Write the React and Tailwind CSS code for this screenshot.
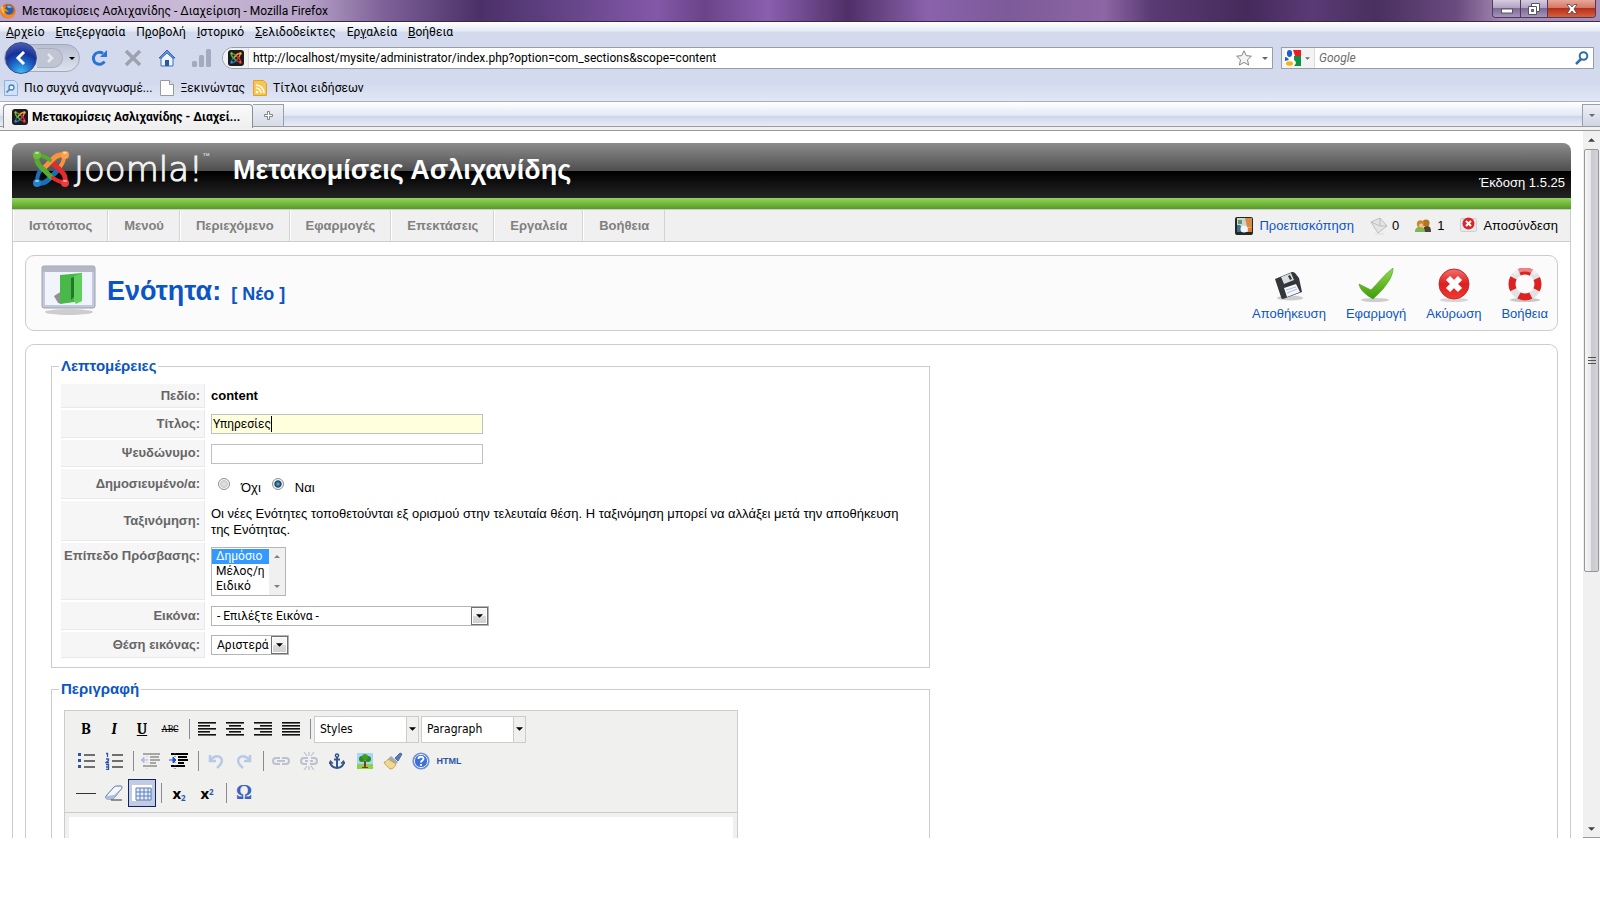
import { useState } from 'react';
import { clsx } from 'clsx';

const BROWSER_MENU = [
  ['', 'Α', 'ρχείο'],
  ['', 'Ε', 'πεξεργασία'],
  ['Π', 'ρ', 'οβολή'],
  ['', 'Ι', 'στορικό'],
  ['', 'Σ', 'ελιδοδείκτες'],
  ['Ερ', 'γ', 'αλεία'],
  ['', 'Β', 'οήθεια'],
];

const ADMIN_MENU = ['Ιστότοπος', 'Μενού', 'Περιεχόμενο', 'Εφαρμογές', 'Επεκτάσεις', 'Εργαλεία', 'Βοήθεια'];

function Caret({ className }) {
  return (
    <svg viewBox="0 0 8 4" className={clsx('shrink-0', className)} fill="currentColor" aria-hidden="true">
      <path d="M0 0h8L4 4z" />
    </svg>
  );
}

function JoomlaMark({ className }) {
  return (
    <svg viewBox="0 0 38 38" className={className} fill="none" strokeLinecap="round" strokeLinejoin="round" aria-hidden="true">
      <path d="M11 17c-4 4-6 8-6 15" stroke="#1670b8" strokeWidth="4" />
      <path d="M27 18c4-4 5-7 5-12" stroke="#f9923c" strokeWidth="4" />
      <path d="M33 5c-5-1-8 0-11 3L11 19" stroke="#f9923c" strokeWidth="5" />
      <path d="M5 33c5 1 8 0 11-3l11-11" stroke="#1670b8" strokeWidth="5" />
      <path d="M33 33c1-5 0-8-3-11L19 11" stroke="#e32a2d" strokeWidth="5" />
      <path d="M5 5c-1 5 0 8 3 11l11 11" stroke="#58a92f" strokeWidth="5" />
      <path d="m17 13 5-5" stroke="#f9923c" strokeWidth="5" />
      <path d="M18 10c-4-3-7-5-13-5" stroke="#58a92f" strokeWidth="4" />
      <path d="M21 28c4 3 7 4 12 5" stroke="#e32a2d" strokeWidth="4" />
      <circle cx="5" cy="5" r="4" fill="#6cbb3c" />
      <circle cx="33" cy="5" r="4" fill="#fba04c" />
      <circle cx="5" cy="33" r="4" fill="#2480c8" />
      <circle cx="33" cy="33" r="4" fill="#ee3a3c" />
      <g fill="#fff" opacity=".6">
        <ellipse cx="5" cy="3" rx="2" ry="1" />
        <ellipse cx="33" cy="3" rx="2" ry="1" />
        <ellipse cx="5" cy="31" rx="2" ry="1" />
        <ellipse cx="33" cy="31" rx="2" ry="1" />
      </g>
    </svg>
  );
}

function Favicon() {
  return (
    <span className="flex size-4 shrink-0 items-center justify-center rounded-[3px] bg-[#1c1c1c]">
      <JoomlaMark className="size-3" />
    </span>
  );
}

function TitleBar() {
  return (
    <header className="flex h-[22px] items-start border-b border-[#3a2750] bg-[linear-gradient(90deg,#b9a5cb_0%,#c9bad6_12%,#b8a4c8_19%,#7d6198_24%,#4b3068_30%,#5d3f80_34%,#8458a8_41%,#6a4489_44%,#8a5fae_48%,#502f68_53%,#8a62ac_58%,#7d5a9a_63%,#8d66a4_69%,#5a3a72_72%,#452a5c_78%,#5a3a74_82%,#48305f_86%,#6b4a80_91%,#a58bb2_94%,#a88fb8_100%)]">
      <div className="flex h-[21px] items-center gap-1.5">
        <svg viewBox="0 0 16 16" className="size-4" aria-hidden="true">
          <circle cx="8" cy="8" r="7.6" fill="#e0701a" />
          <circle cx="8.6" cy="6.8" r="5" fill="#2a5ea8" />
          <path d="M7 3c2-1 5 0 6 2-2-1-3 0-4 0s-2-1-2-2z" fill="#7fb6e6" />
          <path d="M1 4c-1 6 2 11 8 11 4 0 6-3 7-8-1 3-3 5-6 5-4 0-5-2-5-4 1 1 3 1 4 0-2 0-2-2-4-2 0-1 1-2 1-3-2 0-3 1-4 3z" fill="#f58a1f" />
          <path d="M1 4c0 3 1 5 3 7 0-3-1-5-1-8z" fill="#fbc23c" />
        </svg>
        <h1 className="text-[12px] leading-4 text-black">Μετακομίσεις Ασλιχανίδης - Διαχείριση - Mozilla Firefox</h1>
      </div>
      <div className="mr-1 ml-auto flex h-[18px] overflow-hidden rounded-b border border-t-0 border-[#4a3c5c]">
        <button type="button" aria-label="Ελαχιστοποίηση" className="flex w-7 items-center justify-center border-r border-[#4a3c5c] bg-[linear-gradient(#d6cbdf_0%,#b3a3c3_45%,#7d6a96_50%,#a594ba_100%)]">
          <svg viewBox="0 0 12 6" className="mt-1 h-1.5 w-3" aria-hidden="true">
            <rect x=".5" y="1" width="11" height="4" fill="#fff" stroke="#55555f" />
          </svg>
        </button>
        <button type="button" aria-label="Επαναφορά" className="flex w-[27px] items-center justify-center border-r border-[#4a3c5c] bg-[linear-gradient(#d6cbdf_0%,#b3a3c3_45%,#7d6a96_50%,#a594ba_100%)]">
          <svg viewBox="0 0 12 12" className="size-3" fill="#fff" stroke="#55555f" aria-hidden="true">
            <path d="M3.500 .5h8v8h-8z" />
            <path d="M.5 3.500h8v8h-8z" />
            <path d="M3.500 6.500h2v2h-2z" fill="#8a7aa0" />
          </svg>
        </button>
        <button type="button" aria-label="Κλείσιμο" className="flex w-[47px] items-center justify-center bg-[linear-gradient(#e6a79b_0%,#d67866_45%,#b5301c_50%,#d8603c_100%)]">
          <svg viewBox="0 0 12 10" className="h-2.5 w-3" aria-hidden="true">
            <path d="M1 .5h3l2 2.500 2-2.500h3L8 5l3 4.500H8L6 7 4 9.500H1L4 5z" fill="#fff" stroke="#55404a" strokeWidth=".8" />
          </svg>
        </button>
      </div>
    </header>
  );
}

function NavigationBar() {
  return (
    <div className="flex h-8 items-center pr-1.5 pl-1">
      <div className="flex h-7 w-[76px] items-center rounded-full border border-[#a3a9bd] bg-[linear-gradient(#b9c0d2,#dde2ee)]">
        <button type="button" aria-label="Πίσω" className="-my-1 flex size-8 shrink-0 items-center justify-center rounded-full border border-[#3a4a86] bg-[radial-gradient(circle_at_50%_100%,#3fc4f5_0%,#1c68c8_35%,#16309a_60%,#5c6fb8_100%)]">
          <svg viewBox="0 0 14 14" className="size-3.5" fill="none" stroke="#fff" strokeWidth="3" aria-hidden="true">
            <path d="M10 1 4 7l6 6" />
          </svg>
        </button>
        <button type="button" aria-label="Μπροστά" className="flex h-5 w-[26px] items-center justify-center rounded-r-full border border-l-0 border-[#a9afc0] bg-[#bfc5d3]">
          <svg viewBox="0 0 10 10" className="size-2.5" fill="none" stroke="#e4e7f0" strokeWidth="2.500" aria-hidden="true">
            <path d="m3 1 4 4-4 4" />
          </svg>
        </button>
        <Caret className="ml-1.5 h-[3px] w-1.5 text-black" />
      </div>
      <div className="ml-2.5 flex items-center gap-4">
        <button type="button" aria-label="Ανανέωση">
          <svg viewBox="0 0 18 18" className="size-[18px]" fill="none" aria-hidden="true">
            <path d="M14.500 12.500A6 6 0 1 1 13 4.500" stroke="#2a74d8" strokeWidth="3" />
            <path d="M17 1v7h-7z" fill="#2a74d8" />
          </svg>
        </button>
        <button type="button" aria-label="Διακοπή">
          <svg viewBox="0 0 18 18" className="size-[18px]" stroke="#9da2ae" strokeWidth="3.500" aria-hidden="true">
            <path d="m2 2 14 14M16 2 2 16" />
          </svg>
        </button>
        <button type="button" aria-label="Αρχική">
          <svg viewBox="0 0 18 18" className="size-[18px]" aria-hidden="true">
            <path d="M3 9v8h12V9L9 3z" fill="#eef4fd" stroke="#3b6ec4" />
            <path d="M9 1 1 9h2.500L9 4l5.500 5H17z" fill="#5f94e0" stroke="#2a57a8" strokeWidth=".8" />
            <path d="M7 11h4v6H7z" fill="#2a57a8" />
          </svg>
        </button>
        <svg viewBox="0 0 20 20" className="size-5" fill="#a2abbe" aria-hidden="true">
          <rect x="0" y="13" width="5" height="6" rx="1.500" />
          <rect x="7" y="7" width="5" height="12" rx="1.500" />
          <rect x="14" y="1" width="5" height="18" rx="1.500" />
        </svg>
      </div>
      <div className="ml-2.5 flex h-[22px] min-w-0 flex-1 items-center overflow-hidden rounded-l-xl border border-[#9a9da6] bg-white">
        <span className="flex h-full w-[26px] items-center justify-end border-r border-[#dcdcdc] bg-[#f0f1f4] pr-1">
          <Favicon />
        </span>
        <input
          type="text"
          aria-label="Διεύθυνση"
          defaultValue="http://localhost/mysite/administrator/index.php?option=com_sections&scope=content"
          className="min-w-0 flex-1 bg-transparent px-1 text-[12px] text-black outline-none"
        />
        <svg viewBox="0 0 16 16" className="size-4" fill="#f4f4f4" stroke="#84868c" strokeLinejoin="round" aria-hidden="true">
          <path d="m8 .8 2.200 4.800 5.200.6-3.900 3.600 1.100 5.200L8 12.400 3.400 15l1.100-5.200L.6 6.200l5.200-.6z" />
        </svg>
        <Caret className="mr-1 ml-2.5 h-[3px] w-1.5 text-[#66686e]" />
      </div>
      <div className="ml-2 flex h-[22px] w-[313px] items-center border border-[#9a9da6] bg-white">
        <div className="flex h-full w-[33px] items-center gap-1 border-r border-[#dcdcdc] bg-[#f3f3f3] pl-[3px]">
          <svg viewBox="0 0 16 16" className="size-4" aria-hidden="true">
            <path d="M0 0h16v16H0z" fill="#fff" />
            <path d="M8 0h8v6h-6z" fill="#ed1c24" />
            <path d="M9 6h7v10H9c2-2 3-4 0-6z" fill="#0c9344" />
            <ellipse cx="4.500" cy="3.500" rx="2.600" ry="3.400" fill="#1b5fce" />
            <path d="M0 7c2 0 3 1 4 3L0 11z" fill="#1b5fce" />
            <ellipse cx="4.500" cy="13.500" rx="3.600" ry="2.300" fill="#f8b219" />
          </svg>
          <Caret className="h-[3px] w-[5px] text-[#66686e]" />
        </div>
        <input type="search" aria-label="Αναζήτηση" placeholder="Google" className="min-w-0 flex-1 bg-transparent px-1 text-[12px] italic outline-none placeholder:text-[#6d6d6d]" />
        <svg viewBox="0 0 14 14" className="mr-1 size-3.5" fill="none" stroke="#2f6fa8" aria-hidden="true">
          <circle cx="8.500" cy="5" r="3.800" strokeWidth="2" />
          <path d="m6 8-5 5" strokeWidth="2.500" />
        </svg>
      </div>
    </div>
  );
}

function BookmarksBar() {
  return (
    <div className="flex h-7 items-center gap-2 border-b border-[#a9aebd] pl-1">
      <a href="#frequent" className="flex items-center gap-1.5">
        <svg viewBox="0 0 14 16" className="h-4 w-3.5" aria-hidden="true">
          <path d="M.5.5h10l3 3v12H.5z" fill="#cfe2f6" stroke="#8fb2da" />
          <circle cx="7.500" cy="7.500" r="2.500" fill="#e8f3fd" stroke="#4a7fc0" strokeWidth="1.300" />
          <path d="m5.500 9.500-3 3" stroke="#4a7fc0" strokeWidth="1.600" />
        </svg>
        Πιο συχνά αναγνωσμέ...
      </a>
      <a href="#start" className="flex items-center gap-1.5">
        <svg viewBox="0 0 14 16" className="h-4 w-3.5" aria-hidden="true">
          <path d="M.5.5h9l4 4v11H.5z" fill="#fdfdfd" stroke="#9a9a9a" />
          <path d="M9.500.5v4h4" fill="#e4e4e4" stroke="#9a9a9a" />
        </svg>
        Ξεκινώντας
      </a>
      <a href="#headlines" className="flex items-center gap-1.5">
        <svg viewBox="0 0 14 16" className="h-4 w-3.5" fill="none" aria-hidden="true">
          <path d="M.5.5h10l3 3v12H.5z" fill="#fbc64f" stroke="#e0a030" />
          <circle cx="4" cy="12" r="1.300" fill="#fff" />
          <path d="M3 8a5 5 0 0 1 5 5M3 5a8 8 0 0 1 8 8" stroke="#fff" strokeWidth="1.500" />
        </svg>
        Τίτλοι ειδήσεων
      </a>
    </div>
  );
}

function TabStrip() {
  return (
    <div className="flex h-[29px] items-end border-b border-[#9b9b9b] bg-[linear-gradient(#ffffff_0%,#e2e8f4_48%,#ccd5ea_50%,#e6ebf6_84%,#9b9b9b_84%,#9b9b9b_88%,#f0f0f0_88%)] pl-[3px]">
      <a href="#tab" className="mb-0.5 flex h-6 w-[250px] items-center gap-1 rounded-t border border-b-0 border-[#8d8f94] bg-[linear-gradient(#fafafa,#efefef)] pl-2 font-bold whitespace-nowrap text-black">
        <Favicon />
        Μετακομίσεις Ασλιχανίδης - Διαχεί...
      </a>
      <button type="button" aria-label="Νέα καρτέλα" className="mb-1 flex h-[22px] w-[31px] items-center justify-center border border-b-0 border-l-0 border-[#9b9fa9] bg-[linear-gradient(#eef0f5,#d6dbe8)]">
        <svg viewBox="0 0 9 9" className="size-[9px]" fill="#fff" stroke="#77797f" strokeWidth=".9" aria-hidden="true">
          <path d="M3.500.5h2v3h3v2h-3v3h-2v-3h-3v-2h3z" />
        </svg>
      </button>
      <button type="button" aria-label="Λίστα καρτελών" className="mb-1 ml-auto flex h-[22px] w-[18px] items-center justify-center border border-r-0 border-b-0 border-[#9b9fa9] bg-[linear-gradient(#eef0f5,#cfd5e4)]">
        <Caret className="h-[3px] w-1.5 text-[#66686e]" />
      </button>
    </div>
  );
}

function SiteHeader() {
  return (
    <div className="overflow-hidden rounded-t-lg">
      <div className="flex h-[55px] bg-[linear-gradient(#8c8c8c_0%,#505050_50%,#000000_51%,#242424_100%)] text-white">
        <div className="flex w-[203px] items-start gap-1 pt-[7px] pl-5">
          <JoomlaMark className="size-[38px]" />
          <span className="flex font-['DejaVu_Sans'] text-[34px] leading-[38px] font-extralight text-[#f2f2f2] [-webkit-text-stroke:1px_#f2f2f2]">
            Joomla!<sup className="top-0 text-[7px] leading-3 [-webkit-text-stroke:0px]">™</sup>
          </span>
        </div>
        <h2 className="pl-[18px] text-[27px] leading-[54px] font-bold">Μετακομίσεις Ασλιχανίδης</h2>
        <p className="mt-8 mr-1.5 ml-auto text-[13px] leading-4">Έκδοση 1.5.25</p>
      </div>
      <div className="h-[11px] bg-[linear-gradient(#93d65c,#559a26)]" />
    </div>
  );
}

function AdminMenu() {
  return (
    <div className="flex h-[33px] items-stretch border border-[#cccccc] bg-[#f0f0f0] text-[13px]">
      <nav className="flex font-bold text-[#808080]">
        {ADMIN_MENU.map((item) => (
          <a key={item} href="#menu" className="flex items-center border-r border-l border-r-[#d4d4d4] border-l-white px-[15px]">
            {item}
          </a>
        ))}
      </nav>
      <div className="mr-3 ml-auto flex items-center gap-4 text-black">
        <a href="#preview" className="flex items-center gap-1.5 text-[#0b55c4]">
          <svg viewBox="0 0 18 18" className="size-[18px]" aria-hidden="true">
            <rect width="18" height="18" rx="2" fill="#22282a" />
            <path d="M2 1h15v14H2z" fill="#c8d8d2" />
            <path d="M10 1h7v10l-5-1z" fill="#d98a45" />
            <path d="M2 8h3l2 3v4H2z" fill="#35748c" />
            <circle cx="9" cy="12" r="3.500" fill="#f4f4f4" />
            <path d="M3 3h4v4H3z" fill="#6d8f6a" />
            <path d="M13 11h4v4h-4z" fill="#e07a2c" />
          </svg>
          Προεπισκόπηση
        </a>
        <a href="#messages" className="flex items-center gap-1">
          <svg viewBox="0 0 18 18" className="size-[18px]" stroke="#b4b4b4" strokeWidth=".8" aria-hidden="true">
            <path d="m1 5 9-4 7 8-9 7z" fill="#e4e4e4" />
            <path d="m1 5 9 4 0-8M10 9l7 0" fill="none" />
            <path d="M5 17h9" stroke="#d4d4d4" />
          </svg>
          0
        </a>
        <a href="#users" className="flex items-center gap-1.5">
          <svg viewBox="0 0 16 14" className="h-3.5 w-4" aria-hidden="true">
            <path d="M8 13c0-4 1-6 4-6s4 2 4 6z" fill="#4c4335" />
            <circle cx="11" cy="4" r="3.600" fill="#b6741c" />
            <path d="M0 13c0-4 2-5 5-5s5 1 5 5z" fill="#7fb653" />
            <circle cx="5.500" cy="5" r="3.700" fill="#c98a2c" />
            <circle cx="6" cy="6.500" r="2" fill="#f0c890" />
          </svg>
          1
        </a>
        <a href="#logout" className="flex items-center gap-1.5">
          <svg viewBox="0 0 17 17" className="size-[17px]" aria-hidden="true">
            <rect x=".5" y="1.500" width="16" height="13" rx="1" fill="#e6e8f0" stroke="#cdd0da" />
            <circle cx="8.500" cy="6.500" r="6" fill="#dc2626" />
            <path d="m6 4 5 5m0-5L6 9" stroke="#fff" strokeWidth="2" />
          </svg>
          Αποσύνδεση
        </a>
      </div>
    </div>
  );
}

function SaveIcon() {
  return (
    <svg viewBox="0 0 32 34" className="h-[34px] w-8" aria-hidden="true">
      <ellipse cx="17" cy="30" rx="13" ry="2.500" fill="#000" opacity=".18" />
      <path d="m2 11 17-7c1 0 2 0 3 1l4 5 3 14-19 7c-1 0-2-1-2-2z" fill="#33373b" />
      <path d="m8 9 10-4 3 7-10 4z" fill="#d9dde2" />
      <path d="m15 8 2-1 2 4-2 1z" fill="#33373b" />
      <path d="m11 20 12-4 4 8-13 5z" fill="#f5f7fa" />
      <path d="m13 22 10-3m-9 6 10-4" stroke="#a9bfe0" />
    </svg>
  );
}

function ApplyIcon() {
  return (
    <svg viewBox="0 0 36 34" className="h-[34px] w-9" aria-hidden="true">
      <defs>
        <linearGradient id="tick" x1="0" y1="0" x2="0" y2="1">
          <stop offset="0" stopColor="#8fdc4c" />
          <stop offset="1" stopColor="#3f9a08" />
        </linearGradient>
      </defs>
      <ellipse cx="17" cy="32" rx="14" ry="2" fill="#000" opacity=".18" />
      <path d="M1 16c4 2 8 4 12 6C20 15 27 6 35 0c0 4-1 7-3 11-4 7-10 14-17 20C10 28 2 23 1 16z" fill="url(#tick)" stroke="#4c9e1c" strokeWidth=".6" />
    </svg>
  );
}

function CancelIcon() {
  return (
    <svg viewBox="0 0 34 34" className="size-[34px]" aria-hidden="true">
      <defs>
        <linearGradient id="cross" x1="0" y1="0" x2="0" y2="1">
          <stop offset="0" stopColor="#f2706e" />
          <stop offset=".5" stopColor="#dc1f1f" />
          <stop offset="1" stopColor="#f03a30" />
        </linearGradient>
      </defs>
      <ellipse cx="17" cy="32" rx="14" ry="2" fill="#000" opacity=".15" />
      <circle cx="17" cy="16" r="15" fill="url(#cross)" stroke="#c42a2a" />
      <path d="m11 10 12 12m0-12L11 22" stroke="#fff" strokeWidth="6" />
    </svg>
  );
}

function HelpRingIcon() {
  return (
    <svg viewBox="0 0 34 34" className="size-[34px]" fill="none" aria-hidden="true">
      <ellipse cx="17" cy="32" rx="15" ry="2" fill="#000" opacity=".2" />
      <circle cx="17" cy="16" r="13" stroke="#e2e2e2" strokeWidth="7" />
      <circle cx="17" cy="16" r="13" stroke="#de2222" strokeWidth="7" strokeDasharray="12.400 8" strokeDashoffset="6.200" />
      <path d="M6 6a16 16 0 0 1 22 0" stroke="#fff" strokeWidth="4" opacity=".45" />
    </svg>
  );
}

const ACTIONS = [
  { label: 'Αποθήκευση', icon: SaveIcon },
  { label: 'Εφαρμογή', icon: ApplyIcon },
  { label: 'Ακύρωση', icon: CancelIcon },
  { label: 'Βοήθεια', icon: HelpRingIcon },
];

function PageToolbar() {
  return (
    <section className="flex h-[76px] items-start rounded-[9px] border border-[#cccccc] bg-[#fbfbfb] pr-[9px] pl-[15px]">
      <svg viewBox="0 0 56 52" className="mt-[9px] h-[52px] w-14" aria-hidden="true">
        <ellipse cx="28" cy="47" rx="24" ry="3" fill="#000" opacity=".18" />
        <rect x="1" y="1" width="53" height="42" rx="2" fill="#c3c8dc" stroke="#9a9fb2" />
        <path d="M2 2h51v5H2z" fill="#b4b7c4" />
        <path d="M4 7h47v33H4z" fill="#f2f4fb" />
        <path d="m13 31 8-5v13l-4-1z" fill="#8e938f" />
        <path d="m19 10 22-2v28l-22 3z" fill="#48b848" />
        <path d="m33 11 8-3v28l-6 3-2-3z" fill="#5fd05c" />
        <path d="m30 13 3-1v20l-3 3z" fill="#23762a" />
      </svg>
      <h2 className="ml-2.5 flex items-baseline gap-2.5 text-[27px] leading-[70px] font-bold text-[#0b55c4]">
        Ενότητα: <small className="text-[18px]">[ Νέο ]</small>
      </h2>
      <div className="ml-auto flex gap-5 pt-3 text-[13px] text-[#0b55c4]">
        {ACTIONS.map(({ label, icon: Icon }) => (
          <button key={label} type="button" className="flex flex-col items-center gap-1 leading-4">
            <Icon />
            {label}
          </button>
        ))}
      </div>
    </section>
  );
}

function Row({ label, htmlFor, className, top, children }) {
  return (
    <div className={clsx('flex', className)}>
      <label
        htmlFor={htmlFor}
        className={clsx(
          'flex w-36 shrink-0 justify-end border-r border-b border-[#e9e9e9] bg-[#f6f6f6] pr-1 font-bold whitespace-nowrap text-[#666666]',
          top ? 'items-start pt-[5px]' : 'items-center'
        )}
      >
        {label}
      </label>
      <div className="flex min-w-0 flex-1 items-center pl-1.5">{children}</div>
    </div>
  );
}

function DropDown({ id, options, className }) {
  return (
    <span className={clsx('relative flex h-5', className)}>
      <select id={id} className="w-full appearance-none border border-[#b5b5b5] bg-white pl-[5px] font-['Roboto'] text-[12px] text-black outline-none">
        {options.map((option) => (
          <option key={option}>{option}</option>
        ))}
      </select>
      <span className="pointer-events-none absolute top-px right-px flex h-[18px] w-[17px] items-center justify-center border border-[#6f6f6f] bg-[linear-gradient(#f4f4f4_50%,#dadada_50%,#cfcfcf)] shadow-[inset_0_0_0_1px_#ffffff]">
        <Caret className="h-1 w-[7px] text-black" />
      </span>
    </span>
  );
}

function PublishedRadio({ id, checked, onChange, children }) {
  return (
    <span className="flex items-center">
      <input
        id={id}
        type="radio"
        name="published"
        checked={checked}
        onChange={onChange}
        className="mb-1 size-3 appearance-none rounded-full border border-[#8e8f8f] bg-[radial-gradient(circle,#e6e6e6_0%,#cdcdcd_50%,#f6f6f6_60%)] checked:bg-[radial-gradient(circle,#5cc0ea_0%,#123a5c_45%,#f6f6f6_58%)]"
      />
      <label htmlFor={id} className="ml-[11px] pt-[3px]">
        {children}
      </label>
    </span>
  );
}

function DetailsFieldset() {
  const [title, setTitle] = useState('Υπηρεσίες');
  const [published, setPublished] = useState(true);

  return (
    <fieldset className="border border-[#cccccc] px-[9px] pb-[9px] text-[13px] leading-4">
      <legend className="-ml-0.5 px-0.5 text-[15px] font-bold text-[#0b55c4]">Λεπτομέρειες</legend>
      <div className="flex flex-col gap-0.5 pt-2.5">
        <Row label="Πεδίο:" className="min-h-6">
          <b className="text-black">content</b>
        </Row>
        <Row label="Τίτλος:" htmlFor="title" className="min-h-7">
          <span className="relative flex">
            <input
              id="title"
              type="text"
              value={title}
              onChange={(e) => setTitle(e.target.value)}
              className="h-5 w-[272px] border border-[#c0c0c0] bg-[#ffffdd] px-px font-['Roboto'] text-[12px] text-black outline-none"
            />
            <span className="pointer-events-none absolute top-0.5 left-0 flex pl-0.5 font-['Roboto'] text-[12px]" aria-hidden="true">
              <span className="border-r border-black text-transparent">{title}</span>
            </span>
          </span>
        </Row>
        <Row label="Ψευδώνυμο:" htmlFor="alias" className="min-h-[27px]">
          <input id="alias" type="text" className="h-5 w-[272px] border border-[#c0c0c0] bg-white px-px font-['Roboto'] text-[12px] text-black outline-none" />
        </Row>
        <Row label="Δημοσιευμένο/α:" className="min-h-[30px]">
          <div className="flex gap-[11px] pt-1 pl-[7px]">
            <PublishedRadio id="published0" checked={!published} onChange={() => setPublished(false)}>
              Όχι
            </PublishedRadio>
            <PublishedRadio id="published1" checked={published} onChange={() => setPublished(true)}>
              Ναι
            </PublishedRadio>
          </div>
        </Row>
        <Row label="Ταξινόμηση:" className="min-h-10">
          <p className="pt-0.5 pr-2">
            Οι νέες Ενότητες τοποθετούνται εξ ορισμού στην τελευταία θέση. Η ταξινόμηση μπορεί να αλλάξει μετά την αποθήκευση της Ενότητας.
          </p>
        </Row>
        <Row label="Επίπεδο Πρόσβασης:" htmlFor="access" className="min-h-[57px]" top>
          <div className="flex h-[49px] w-[75px] border border-[#b5b5b5] bg-white">
            <select
              id="access"
              size={3}
              defaultValue="0"
              className="min-w-0 flex-1 appearance-none overflow-hidden border-0 bg-white py-px font-['Roboto'] text-[12px] outline-none"
            >
              <option value="0" className="h-[15px] px-1 leading-[15px] checked:bg-[linear-gradient(#3399ff,#3399ff)] checked:[-webkit-text-fill-color:#ffffff]">Δημόσιο</option>
              <option value="1" className="h-[15px] px-1 leading-[15px]">Μέλος/η</option>
              <option value="2" className="h-[15px] px-1 leading-[15px]">Ειδικό</option>
            </select>
            <span className="flex w-4 flex-col items-center justify-between bg-[#f0f0f0] py-[7px] text-[#808080]">
              <Caret className="h-[3px] w-1.5 rotate-180" />
              <Caret className="h-[3px] w-1.5" />
            </span>
          </div>
        </Row>
        <Row label="Εικόνα:" htmlFor="image" className="min-h-7">
          <DropDown id="image" options={['- Επιλέξτε Εικόνα -']} className="w-[278px]" />
        </Row>
        <Row label="Θέση εικόνας:" htmlFor="position" className="min-h-[26px]">
          <DropDown id="position" options={['Αριστερά']} className="w-[78px]" />
        </Row>
      </div>
    </fieldset>
  );
}

function Tool({ label, active, faded, children }) {
  return (
    <button
      type="button"
      aria-label={label}
      className={clsx(
        'flex h-7 w-7 items-center justify-center font-serif',
        active && 'border border-[#0a246a] bg-[#c2cbe0]',
        faded && 'opacity-30'
      )}
    >
      {children}
    </button>
  );
}

function Divider() {
  return <span className="mr-[3px] ml-[5px] h-5 w-px bg-[#8a8a94]" />;
}

// Lines of text as drawn on the alignment buttons: [x, width] per line
function Lines({ rows }) {
  return (
    <svg viewBox="0 0 18 16" className="h-4 w-[18px]" fill="#111" aria-hidden="true">
      {rows.map(([x, width], i) => (
        <rect key={i} x={x} y={1 + i * 3} width={width} height="1.600" />
      ))}
    </svg>
  );
}

function ListIcon({ numbered }) {
  return (
    <svg viewBox="0 0 18 18" className="size-[18px]" aria-hidden="true">
      <path d="M7 3h11M7 9h11M7 15h11" stroke="#444" strokeWidth="1.500" />
      {numbered ? (
        <path d="M1 1.500h1.500V5M1 7h2.500v1.500L1 10.500h3M1 12.500h2.500v5H1m0-2.500h2.500" stroke="#2d55b0" fill="none" strokeWidth="1.300" />
      ) : (
        <path d="M1 1h3v3H1zM1 7h3v3H1zM1 13h3v3H1z" fill="#2d55b0" />
      )}
    </svg>
  );
}

function IndentIcon({ out }) {
  return (
    <svg viewBox="0 0 20 18" className="h-[18px] w-5" aria-hidden="true">
      <path d="M2 2h17M9 5h9M9 8h10M9 11h6M2 14h14" stroke="#000" strokeWidth="1.800" />
      <path d="M6 17V0" stroke="#555" strokeDasharray="1 2" />
      <path d={out ? 'M7 8H3V5L0 8l3 3V8' : 'M0 8h4V5l3 3-3 3V8'} fill="#1c50d0" stroke="#1c50d0" />
    </svg>
  );
}

function FormatSelect({ label }) {
  return (
    <span className="relative flex h-[27px] w-[105px]">
      <select aria-label={label} className="w-full appearance-none border border-[#cccccc] bg-white pl-[5px] font-['DejaVu_Sans_Condensed'] text-[12px] text-black outline-none">
        <option>{label}</option>
      </select>
      <span className="pointer-events-none absolute top-px right-px flex h-[25px] w-3 items-center justify-center border-l border-[#cccccc] bg-[#f0f0ee]">
        <Caret className="h-1 w-[7px] text-black" />
      </span>
    </span>
  );
}

function EditorToolbar() {
  return (
    <div className="flex flex-col gap-1 border-b border-[#cccccc] bg-[#f0f0ee] pt-1 pb-[5px] pl-[7px] text-black">
      <div className="flex h-7 items-center">
        <Tool label="Έντονα"><b className="text-[15px] font-black">B</b></Tool>
        <Tool label="Πλάγια"><b className="text-[15px] italic">I</b></Tool>
        <Tool label="Υπογράμμιση"><b className="text-[15px] underline">U</b></Tool>
        <Tool label="Διακριτή διαγραφή"><span className="text-[10px] line-through">ABC</span></Tool>
        <Divider />
        <Tool label="Στοίχιση αριστερά"><Lines rows={[[0, 18], [0, 12], [0, 18], [0, 12], [0, 18]]} /></Tool>
        <Tool label="Στοίχιση στο κέντρο"><Lines rows={[[0, 18], [3, 12], [0, 18], [3, 12], [0, 18]]} /></Tool>
        <Tool label="Στοίχιση δεξιά"><Lines rows={[[0, 18], [6, 12], [0, 18], [6, 12], [0, 18]]} /></Tool>
        <Tool label="Πλήρης στοίχιση"><Lines rows={[[0, 18], [0, 18], [0, 18], [0, 18], [0, 18]]} /></Tool>
        <Divider />
        <div className="flex gap-0.5">
          <FormatSelect label="Styles" />
          <FormatSelect label="Paragraph" />
        </div>
      </div>
      <div className="flex h-7 items-center">
        <Tool label="Λίστα με κουκκίδες"><ListIcon /></Tool>
        <Tool label="Αριθμημένη λίστα"><ListIcon numbered /></Tool>
        <Divider />
        <Tool label="Μείωση εσοχής" faded><IndentIcon out /></Tool>
        <Tool label="Αύξηση εσοχής"><IndentIcon /></Tool>
        <Divider />
        <Tool label="Αναίρεση" faded>
          <svg viewBox="0 0 16 16" className="size-4" fill="none" stroke="#3b6fd4" strokeWidth="2.500" aria-hidden="true">
            <path d="M2 2v6h6M2 8c3-5 8-6 11-3 2 3 0 7-4 10" />
          </svg>
        </Tool>
        <Tool label="Επανάληψη" faded>
          <svg viewBox="0 0 16 16" className="size-4" fill="none" stroke="#3b6fd4" strokeWidth="2.500" aria-hidden="true">
            <path d="M14 2v6H8M14 8c-3-5-8-6-11-3-2 3 0 7 4 10" />
          </svg>
        </Tool>
        <Divider />
        <Tool label="Σύνδεσμος" faded>
          <svg viewBox="0 0 18 10" className="h-2.5 w-[18px]" fill="none" stroke="#45588c" strokeWidth="2" aria-hidden="true">
            <path d="M8 2H4a3 3 0 0 0 0 6h4M10 2h4a3 3 0 0 1 0 6h-4M5 5h8" />
          </svg>
        </Tool>
        <Tool label="Αφαίρεση συνδέσμου" faded>
          <svg viewBox="0 0 18 18" className="size-[18px]" fill="none" stroke="#45588c" strokeWidth="2" aria-hidden="true">
            <path d="M8 6H4a3 3 0 0 0 0 6h3M11 6h3a3 3 0 0 1 0 6h-4M5 9h3m2 0h3" />
            <path d="m4 0 3 4M9 0v4m5-4-3 4M4 18l3-4m2 4v-4m5 4-3-4" strokeWidth="1.200" />
          </svg>
        </Tool>
        <Tool label="Άγκυρα">
          <svg viewBox="0 0 16 16" className="size-4" fill="none" stroke="#34568e" strokeWidth="2" aria-hidden="true">
            <circle cx="8" cy="2.500" r="1.600" strokeWidth="1.500" />
            <path d="M8 4v11M5 6.500h6M1.500 9c0 4 2 5.500 6.500 6 4.500-.5 6.500-2 6.500-6" />
            <path d="m0 11 1.500-3L4 10.500M16 11l-1.500-3L12 10.500" strokeWidth="1.300" />
          </svg>
        </Tool>
        <Tool label="Εικόνα">
          <svg viewBox="0 0 16 16" className="size-4" aria-hidden="true">
            <path d="M0 0h16v11H0z" fill="#a8d4f8" />
            <path d="M0 11h16v5H0z" fill="#8fd04a" />
            <path d="M7 8h2v6h2v1H5v-1h2z" fill="#7a3f16" />
            <circle cx="5" cy="6" r="3" fill="#2f8a1c" />
            <circle cx="11" cy="6" r="3" fill="#2f8a1c" />
            <circle cx="8" cy="4" r="3" fill="#3da024" />
          </svg>
        </Tool>
        <Tool label="Καθαρισμός κώδικα">
          <svg viewBox="0 0 20 18" className="h-[18px] w-5" aria-hidden="true">
            <path d="m12 6 5-5 2 1-4 7z" fill="#5c7cb8" stroke="#34568e" strokeWidth=".8" />
            <path d="m8 4 7 6-2 2-8-5z" fill="#a8a8b0" />
            <path d="m5 7 8 5c-1 3-3 5-6 5-2-2-5-4-6-7 2 0 3-1 4-3z" fill="#f2d78c" stroke="#b89a50" strokeWidth=".8" />
          </svg>
        </Tool>
        <Tool label="Βοήθεια">
          <svg viewBox="0 0 18 18" className="size-[18px]" fill="none" aria-hidden="true">
            <circle cx="9" cy="9" r="7.800" fill="#3a70dc" stroke="#6f8fd0" strokeWidth="1.500" />
            <circle cx="9" cy="9" r="6.600" stroke="#e6eefc" />
            <path d="M6.500 7c0-3 5-3 5-.3 0 1.800-2.500 1.800-2.500 3.800M9 12v1.800" stroke="#fff" strokeWidth="1.900" />
          </svg>
        </Tool>
        <Tool label="Επεξεργασία HTML"><span className="font-['Liberation_Sans'] text-[9px] font-bold text-[#2d55a4]">HTML</span></Tool>
      </div>
      <div className="flex h-7 items-center">
        <Tool label="Οριζόντια γραμμή"><span className="h-px w-5 bg-[#333333]" /></Tool>
        <Tool label="Απαλοιφή μορφοποίησης">
          <svg viewBox="0 0 18 16" className="h-4 w-[18px]" aria-hidden="true">
            <path d="M1 11 9 2c1-1 2-1 4-1h3c1 0 1 1 1 2l-7 9c-1 1-2 2-3 2H3c-2 0-3-1-2-3z" fill="#f4f6fc" stroke="#5474a8" />
            <path d="m1 11 8-1 8-7-7 9c-1 1-2 2-3 2H3c-2 0-3-1-2-3z" fill="#aebdde" />
            <path d="M6 15h11" stroke="#333" />
          </svg>
        </Tool>
        <Tool label="Πίνακας" active>
          <svg viewBox="0 0 20 16" className="h-4 w-5" fill="none" aria-hidden="true">
            <path d="M0 0h20v3H0zM0 0h4v16H0z" fill="#fff" />
            <path d="M4 3h15v12H4z" fill="#e8effa" />
            <path d="M4 3h15v12H4zM4 7h15M4 11h15M8 3v12M12 3v12M16 3v12" stroke="#5b7fbe" />
          </svg>
        </Tool>
        <Divider />
        <Tool label="Δείκτης"><b className="font-['Open_Sans'] text-[15px]">x<sub className="text-[8px] text-[#2d55b0]">2</sub></b></Tool>
        <Tool label="Εκθέτης"><b className="font-['Open_Sans'] text-[15px]">x<sup className="text-[8px] text-[#2d55b0]">2</sup></b></Tool>
        <Divider />
        <Tool label="Ειδικός χαρακτήρας"><b className="text-[20px] text-[#3a62c0]">Ω</b></Tool>
      </div>
    </div>
  );
}

function DescriptionFieldset() {
  return (
    <fieldset className="mt-[13px] min-h-80 border border-[#cccccc] px-3 text-[13px] leading-4">
      <legend className="-ml-[5px] px-0.5 text-[15px] font-bold text-[#0b55c4]">Περιγραφή</legend>
      <div className="mt-[13px] w-[674px] border border-[#cccccc] bg-[#f0f0ee]">
        <EditorToolbar />
        <textarea aria-label="Περιγραφή" className="mx-1 mt-1 block h-52 w-[664px] resize-none bg-white p-1 outline-none" />
      </div>
    </fieldset>
  );
}

function Scrollbar() {
  return (
    <div className="flex w-[17px] shrink-0 flex-col items-center border-b border-[#9b9b9b] bg-[#f0f0f0] text-[#404040]" aria-hidden="true">
      <span className="flex h-[18px] items-center">
        <Caret className="h-1 w-[7px] rotate-180" />
      </span>
      <span className="flex h-[423px] w-[15px] flex-col items-center justify-center gap-0.5 rounded-xs border border-[#979797] bg-[linear-gradient(90deg,#f5f5f5_0%,#e9e9eb_45%,#c9cad0_50%,#d2d2d8_100%)]">
        <span className="h-px w-2 bg-[#555555]" />
        <span className="h-px w-2 bg-[#555555]" />
        <span className="h-px w-2 bg-[#555555]" />
      </span>
      <span className="mt-auto flex h-4 items-center">
        <Caret className="h-1 w-[7px]" />
      </span>
    </div>
  );
}

export default function App() {
  return (
    <div className="flex h-screen flex-col overflow-hidden bg-white pb-[62px] font-['Roboto',sans-serif] text-[12px] text-black">
      <TitleBar />
      <div className="bg-[linear-gradient(#ffffff_0px,#e4eaf5_9px,#d3daed_10px,#d3daed_62px,#e2e8f6_80px)]">
        <nav className="flex h-5 items-center gap-[11px] pl-1.5">
          {BROWSER_MENU.map(([before, key, after]) => (
            <a key={before + key + after} href="#browser">
              {before}
              <u>{key}</u>
              {after}
            </a>
          ))}
        </nav>
        <NavigationBar />
        <BookmarksBar />
      </div>
      <TabStrip />
      <div className="flex min-h-0 flex-1">
        <main className="min-w-0 flex-1 overflow-hidden px-3 pt-3 font-['Liberation_Sans',sans-serif]">
          <SiteHeader />
          <AdminMenu />
          <div className="flex flex-col gap-[13px] border-x border-[#cccccc] px-3 pt-[13px]">
            <PageToolbar />
            <section className="rounded-t-[9px] border border-b-0 border-[#cccccc] px-[25px] pt-[13px]">
              <div className="w-3/5 min-w-[720px] pr-2.5">
                <DetailsFieldset />
                <DescriptionFieldset />
              </div>
            </section>
          </div>
        </main>
        <Scrollbar />
      </div>
    </div>
  );
}
